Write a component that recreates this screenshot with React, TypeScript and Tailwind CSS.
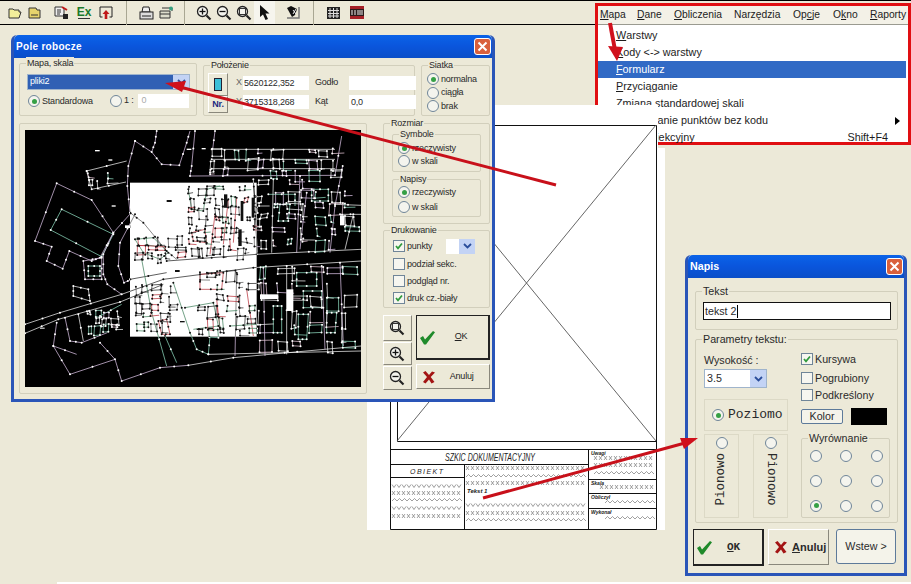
import React from "react";

const FONT = { fontFamily: '"Liberation Sans", Arial, sans-serif' };

function Radio({ on = false, label, className = "" }: { on?: boolean; label?: string; className?: string }) {
  return (
    <span className={`flex items-center gap-[2px] leading-none text-[#2a2a2a] whitespace-nowrap ${className}`}>
      <span className="flex h-[12px] w-[12px] shrink-0 items-center justify-center rounded-full border border-[#6f8598] bg-[#f4f4ee]">
        {on && <span className="h-[5px] w-[5px] rounded-full bg-[#35a045]" />}
      </span>
      {label}
    </span>
  );
}

function Check({ on = false, label }: { on?: boolean; label: string }) {
  return (
    <span className="flex items-center gap-[2px] leading-none text-[#2a2a2a] whitespace-nowrap">
      <span className="flex h-[12px] w-[12px] shrink-0 items-center justify-center border border-[#6f8598] bg-[#f6f6f0]">
        {on && (
          <svg width="10" height="10" viewBox="0 0 10 10">
            <path d="M2 5l2 2.4L8 2.5" fill="none" stroke="#2f9a3c" strokeWidth="1.7" />
          </svg>
        )}
      </span>
      {label}
    </span>
  );
}

function Group({ label, className = "", children }: { label?: string; className?: string; children?: React.ReactNode }) {
  return (
    <div className={`relative rounded-[2px] border border-[#d2cfbc] ${className}`}>
      {label && (
        <span className="absolute -top-[7px] left-[6px] bg-[#ece9d8] px-[1px] leading-[12px] text-[#2a2a2a] whitespace-nowrap">
          {label}
        </span>
      )}
      {children}
    </div>
  );
}

function Raised({ className = "", children }: { className?: string; children?: React.ReactNode }) {
  return (
    <div className={`flex items-center border border-t-white border-l-white border-r-[#8a887c] border-b-[#8a887c] bg-[#ece9d8] ${className}`}>
      {children}
    </div>
  );
}

const GreenCheck = () => (
  <svg width="17" height="15" viewBox="0 0 17 15">
    <path d="M1 8l3-2 2 3.5L14 1l2 1.2L7 14.5H5z" fill="#1f8a2a" />
  </svg>
);
const RedX = () => (
  <svg width="14" height="14" viewBox="0 0 14 14">
    <path d="M1 2.5L3.5 1 7 5l3-3.5 3 1L8.700 7l3.800 5-3 1.500L7 9.500 3.500 13.500 1 12l4-5z" fill="#a31414" />
  </svg>
);
const Caret = () => (
  <span className="flex h-full w-[16px] shrink-0 items-center justify-center bg-[#c3d3f5]">
    <svg width="9" height="6" viewBox="0 0 9 6">
      <path d="M1 1l3.500 3.500L8 1" fill="none" stroke="#2a4d9a" strokeWidth="1.800" />
    </svg>
  </span>
);

function TitleBar({ title, cls }: { title: string; cls?: string }) {
  return (
    <div className="flex h-[23px] shrink-0 items-center justify-between rounded-t-[5px] bg-gradient-to-b from-[#0b63e8] via-[#0a55dc] to-[#0a4fc8] pl-[2px] pr-[1px]">
      <span className={`font-bold text-white ${cls ?? ""}`}>{title}</span>
      <span className="flex h-[17px] w-[17px] items-center justify-center rounded-[3px] border border-white bg-[#d9603c]">
        <svg width="11" height="11" viewBox="0 0 11 11">
          <path d="M1.500 1.500l8 8M9.500 1.500l-8 8" stroke="#fff" strokeWidth="2" />
        </svg>
      </span>
    </div>
  );
}

function Zoom({ kind, s = 16 }: { kind: "+" | "-" | "o"; s?: number }) {
  return (
    <svg width={s} height={s} viewBox="0 0 16 16">
      <circle cx="6.500" cy="6.500" r="5" fill="#f4f4ee" stroke="#222" strokeWidth="1.300" />
      <path d="M10.500 10.500L14.500 14.500" stroke="#222" strokeWidth="2.200" />
      {kind !== "-" && kind !== "o" && <path d="M6.500 3.500v6" stroke="#111" strokeWidth="1.300" />}
      {kind !== "o" && <path d="M3.500 6.500h6" stroke="#111" strokeWidth="1.300" />}
      {kind === "o" && <rect x="3.500" y="3.500" width="6" height="6" fill="none" stroke="#333" />}
    </svg>
  );
}

function Toolbar() {
  const sep = <span className="block h-[24px] w-px bg-[#a9a793]" />;
  return (
    <div className="flex h-[25px] items-center border-y border-black bg-[#ece9d8] pl-[8px]">
      <svg width="14" height="12" viewBox="0 0 14 12"><path d="M1 2h4l1 1h5v2h2l-2 6H1z" fill="#f3ef9a" stroke="#333" /></svg>
      <svg className="ml-[6px]" width="13" height="12" viewBox="0 0 13 12"><path d="M1 1h7l1 2h3v8H1z" fill="#e6d36c" stroke="#333" /><path d="M3 8h7" stroke="#333" /></svg>
      <svg className="ml-[13px]" width="15" height="14" viewBox="0 0 15 14"><path d="M1 1h7l2 2v7H1z" fill="#eee" stroke="#333" /><path d="M3 4h4M3 6h4M3 8h3" stroke="#333" /><path d="M8 1l5 3" stroke="#c01818" strokeWidth="2" /><rect x="9" y="8" width="5" height="5" fill="#222" /></svg>
      <span className="ml-[8px] flex w-[14px] flex-col items-center">
        <span className="text-[12px] font-bold leading-[11px] text-[#1c7a2c]">Ex</span>
        <span className="h-px w-[12px] bg-[#333]" />
      </span>
      <svg className="ml-[8px]" width="14" height="14" viewBox="0 0 14 14"><path d="M3.500 11H1V1h12v10h-2.500" fill="none" stroke="#222" /><path d="M7 4l3.500 4H8.300v5H5.700V8H3.500z" fill="#c01818" /></svg>
      <span className="ml-[13px]">{sep}</span>
      <svg className="ml-[12px]" width="15" height="14" viewBox="0 0 15 14"><path d="M4 1h6l1 5H3z" fill="#eee" stroke="#222" /><rect x="1" y="6" width="13" height="7" fill="#ddd" stroke="#222" /><path d="M3 10h9" stroke="#222" /></svg>
      <svg className="ml-[5px]" width="15" height="13" viewBox="0 0 15 13"><path d="M1 5h10v7H1z" fill="#dcdccc" stroke="#333" /><path d="M3 2h10v3M1 8h10" fill="none" stroke="#333" /><circle cx="12" cy="2.500" r="2" fill="#35a080" /></svg>
      <span className="ml-[10px]">{sep}</span>
      <span className="ml-[11px] flex items-center gap-[4px]">
        <Zoom kind="+" />
        <Zoom kind="-" />
        <Zoom kind="o" />
      </span>
      <span className="ml-[2px] flex h-[23px] w-[21px] items-center justify-center bg-[#f6f5ee]">
        <svg width="11" height="15" viewBox="0 0 11 15"><path d="M1 0v12l3-2.500L6.500 15 9 14 6.500 8.500H10.500z" fill="#111" /></svg>
      </span>
      <svg className="ml-[10px]" width="15" height="15" viewBox="0 0 15 15"><path d="M2 13h12V2" fill="none" stroke="#777" strokeWidth="1.500" /><path d="M2 3l4-2 6 3-2 6-3 2z" fill="#111" /><path d="M8 5l3 4M11 4L8 9" stroke="#eee" /></svg>
      <span className="ml-[13px]">{sep}</span>
      <svg className="ml-[13px]" width="13" height="12" viewBox="0 0 13 12"><rect width="13" height="12" fill="#222" /><path d="M3 1v10M6.500 1v10M10 1v10M1 3.500h11M1 6.500h11M1 9h11" stroke="#ddd" /></svg>
      <svg className="ml-[10px]" width="14" height="13" viewBox="0 0 14 13"><rect width="14" height="13" fill="#a52027" /><rect y="3" width="14" height="7" fill="#2a1a1a" /><path d="M2 4v5M5 4v5M8 4v5M10 4v5M12 4v5" stroke="#eee" /></svg>
    </div>
  );
}

function MenuPanel() {
  const items = ["Warstwy", "Kody <-> warstwy", "Formularz", "Przyciąganie", "Zmiana standardowej skali"];
  return (
    <div className="absolute left-[595px] top-[3px] flex h-[142px] w-[316px] flex-col border-[3px] border-[#e00f12] bg-white text-[10.800px] text-[#1c1c1c]">
      <div className="flex h-[19px] shrink-0 items-center border-b border-[#9a9a90] bg-[#f3f1e7] text-[10.300px]">
        <span className="ml-[2px] w-[37px]"><u>M</u>apa</span>
        <span className="w-[37px]"><u>D</u>ane</span>
        <span className="w-[60px]"><u>O</u>bliczenia</span>
        <span className="w-[59px]">Narzędzia</span>
        <span className="w-[40px]">Op<u>c</u>je</span>
        <span className="w-[37px]">O<u>k</u>no</span>
        <span><u>R</u>aporty</span>
      </div>
      <div className="flex flex-col pt-[2px]">
        {items.map((t) => (
          <div
            key={t}
            className={`flex h-[17px] items-center pl-[18px] pr-[2px] ${t === "Formularz" ? "mr-[2px] bg-[#316ac5] text-white" : ""}`}
          >
            <u>{t[0]}</u>
            {t.slice(1)}
          </div>
        ))}
        <div className="flex h-[17px] items-center justify-between pl-[14px] pr-[8px]">
          <span><u>W</u>ykazywanie punktów bez kodu</span>
          <svg width="5" height="8" viewBox="0 0 5 8"><path d="M0 0l5 4-5 4z" fill="#000" /></svg>
        </div>
        <div className="flex h-[17px] items-center justify-between pl-[12px] pr-[20px]">
          <span><u>U</u>kład projekcyjny</span>
          <span>Shift+F4</span>
        </div>
      </div>
    </div>
  );
}

function Zig({ x, y, w, k }: { x: number; y: number; w: number; k: "w" | "x" | "v" }) {
  const step = 5;
  const n = Math.floor(w / step);
  let d = "";
  for (let i = 0; i < n; i++) {
    const a = x + i * step;
    if (k === "x") d += `M${a} ${y - 2}l3 4M${a + 3} ${y - 2}l-3 4`;
    else if (k === "v") d += `M${a} ${y - 1.500}l2 3 2-3`;
    else d += `M${a} ${y + 1}l2.500-2.500 2.500 2.500`;
  }
  return <path d={d} stroke="#777" strokeWidth="0.700" fill="none" />;
}

function Sheet() {
  return (
    <svg className="absolute left-[367px] top-[105px]" width="298" height="425" viewBox="367 105 298 425">
      <path d="M367 105H658V148H665V530H367z" fill="#fff" />
      <g fill="none" stroke="#111" strokeWidth="1">
        <path d="M397.500 125.500H656.500V529.500H390.500V400M397.500 125.500V441.500H656.500" />
        <path d="M390.500 449.500H657M390.500 464.500H588.500M390.500 477.500H464.500M464.500 464.500V529.500M588.500 449.500V529.500M588.500 479.500H657M588.500 493.500H657M588.500 508.500H657" />
      </g>
      <path d="M397 125L656 441M656 125L397 441" stroke="#555" strokeWidth="0.900" />
      {[[392, 486, 70, "v"], [392, 493, 70, "x"], [392, 500, 70, "w"], [392, 508, 70, "v"], [392, 516, 70, "x"]].map((r, i) => (
        <Zig key={i} x={r[0] as number} y={r[1] as number} w={r[2] as number} k={r[3] as "w"} />
      ))}
      {[[466, 468, 120, "x"], [466, 476, 120, "w"], [466, 483, 120, "x"], [466, 505, 120, "v"], [466, 513, 120, "x"], [466, 520, 120, "w"], [594, 458, 62, "x"], [594, 465, 62, "x"], [594, 473, 62, "w"], [600, 487, 55, "x"], [605, 502, 50, "w"], [605, 518, 50, "w"]].map((r, i) => (
        <Zig key={i} x={r[0] as number} y={r[1] as number} w={r[2] as number} k={r[3] as "w"} />
      ))}
      <g fontFamily='"Liberation Sans", sans-serif' fontStyle="italic" fill="#222">
        <text x="445" y="461" fontSize="10.500" textLength="90" lengthAdjust="spacingAndGlyphs">SZKIC DOKUMENTACYJNY</text>
        <text x="410" y="474" fontSize="7" textLength="33">OBIEKT</text>
        <text x="467" y="493" fontSize="6" fontWeight="bold">Tekst 1</text>
        <text x="591" y="455" fontSize="5" fontWeight="bold">Uwagi</text>
        <text x="591" y="485" fontSize="5" fontWeight="bold">Skala</text>
        <text x="591" y="499" fontSize="5" fontWeight="bold">Obliczył</text>
        <text x="591" y="514" fontSize="5" fontWeight="bold">Wykonał</text>
      </g>
    </svg>
  );
}

type L = [string, number[]];
const BASE: L[] = [
  ["p", [110, 172, 215, 222, 280, 320, 240, 395, 215, 405, 148, 375, 128, 428, 80, 405, 95, 362, 45, 345, 110, 172]],
  ["g", [125, 250, 92, 312, 245, 392, 280, 325, 125, 250]],
  ["p", [332, 262, 280, 320, 250, 385, 250, 445, 262, 475, 305, 505]],
  ["p", [345, 265, 300, 350, 295, 420, 312, 470, 335, 460]],
  ["p", [345, 45, 325, 120, 322, 180, 330, 260, 370, 290, 440, 375, 470, 400]],
  ["p", [345, 45, 395, 78, 425, 115, 478, 118, 500, 50, 510, 15]],
  ["p", [525, 15, 515, 120, 510, 150, 945, 148, 965, 30]],
  ["p", [585, 15, 578, 70]],
  ["p", [410, 15, 405, 50, 395, 78]],
  ["p", [968, 120, 945, 240, 930, 380]],
  ["w", [945, 235, 1023, 238]],
  ["w", [960, 265, 1023, 265]],
  ["w", [200, 135, 320, 105]],
  ["w", [200, 135, 215, 190, 318, 168]],
  ["w", [15, 595, 120, 560, 305, 505, 430, 460, 700, 425, 1023, 405]],
  ["w", [15, 622, 115, 580, 300, 528, 430, 475]],
  ["w", [440, 405, 710, 385, 1023, 370]],
  ["w", [330, 460, 440, 440]],
  ["w", [505, 718, 640, 695, 1023, 660]],
  ["w", [565, 685, 1023, 675]],
  ["p", [110, 590, 100, 660, 150, 745, 285, 700, 305, 765, 420, 725, 505, 718]],
  ["p", [100, 660, 170, 685]],
  ["p", [135, 575, 150, 645, 185, 650, 262, 620]],
  ["w", [175, 565, 190, 645]],
  ["p", [240, 650, 285, 700]],
  ["g", [460, 470, 510, 620, 530, 670, 565, 685, 570, 630]],
  ["g", [365, 400, 395, 560, 440, 720]],
  ["w", [160, 480, 205, 490, 210, 525, 160, 510, 160, 480]],
  ["p", [190, 405, 245, 395, 245, 460, 195, 460, 190, 405]],
  ["g", [205, 420, 240, 420, 240, 450, 205, 450, 205, 420]],
  ["w", [575, 70, 945, 70]],
  ["w", [575, 100, 945, 100]],
  ["w", [575, 128, 945, 128]],
  ["g", [745, 205, 825, 205, 825, 240]],
  ["g", [875, 190, 925, 190, 925, 225, 875, 225, 875, 190]],
  ["g", [780, 235, 810, 235, 805, 285, 775, 285, 780, 235]],
  ["g", [760, 540, 785, 540, 785, 620, 760, 620, 760, 540]],
  ["g", [835, 565, 865, 565, 860, 640, 835, 640, 835, 565]],
  ["g", [920, 560, 950, 560, 945, 620, 920, 620, 920, 560]],
  ["g", [850, 495, 905, 495, 905, 545, 850, 545, 850, 495]],
  ["g", [830, 440, 890, 440, 890, 480, 830, 480, 830, 440]],
  ["p", [650, 440, 645, 690]],
  ["p", [730, 425, 735, 690]],
  ["w", [800, 420, 800, 685]],
  ["p", [905, 420, 915, 670]],
  ["p", [960, 410, 970, 660]],
  ["w", [700, 160, 712, 380]],
  ["w", [760, 160, 755, 380]],
  ["p", [840, 150, 830, 380]],
  ["p", [860, 200, 850, 280, 840, 370]],
  ["w", [1000, 265, 975, 370]],
  ["r", [515, 320, 555, 310, 560, 350, 520, 345, 515, 320]],
  ["g", [505, 190, 515, 250, 550, 255, 560, 190, 600, 180]],
  ["r", [625, 220, 610, 355]],
  ["r", [650, 215, 640, 350]],
  ["r", [585, 265, 570, 385]],
  ["g", [345, 340, 400, 335, 445, 380, 420, 400, 370, 380, 345, 340]],
  ["r", [540, 445, 610, 440, 605, 490, 540, 490, 540, 445]],
  ["g", [495, 545, 580, 530, 595, 600, 520, 610]],
  ["r", [590, 520, 600, 610]],
  ["r", [680, 490, 700, 630]],
  ["g", [630, 600, 710, 595]],
  ["r", [415, 585, 440, 580, 450, 625, 425, 625, 415, 585]],
  ["g", [435, 630, 470, 710]],
  ["g", [240, 570, 305, 535]],
];

function buildLines(): L[] {
  const out = [...BASE];
  let seed = 4711;
  const rnd = () => {
    seed = (seed * 1103515245 + 12345) & 0x7fffffff;
    return seed / 0x7fffffff;
  };
  const zones: [number, number, number, number, number, number][] = [
    [720, 160, 1000, 372, 42, 36],
    [720, 425, 1000, 650, 50, 44],
    [510, 185, 705, 378, 24, 30],
    [350, 335, 500, 392, 30, 24],
    [345, 480, 450, 620, 26, 28],
    [535, 440, 705, 620, 30, 34],
    [205, 555, 300, 620, 22, 22],
    [205, 140, 285, 180, 30, 22],
    [575, 72, 945, 140, 36, 30],
  ];
  const kinds = ["w", "p", "g", "w", "r"];
  zones.forEach(([x0, y0, x1, y1, sx, sy]) => {
    for (let x = x0; x < x1; x += sx) {
      for (let y = y0; y < y1; y += sy) {
        const roll = rnd();
        if (roll < 0.22) continue;
        const jx = x + rnd() * 10 - 5;
        const jy = y + rnd() * 10 - 5;
        const w = 8 + rnd() * (sx - 6);
        const h = 8 + rnd() * (sy - 4);
        const s = rnd() * 6 - 3;
        const k = kinds[Math.floor(rnd() * kinds.length)];
        if (roll < 0.55) {
          // open run of a wall: a street front or a single fence
          out.push([k, [jx, jy, jx + s, jy + h, jx + w, jy + h + s]]);
        } else {
          out.push([k, [jx, jy, jx + w, jy + s, jx + w + s, jy + h, jx + s, jy + h - s, jx, jy]]);
        }
      }
    }
  });
  return out;
}
const LINES = buildLines();

const BLOBS = [
  [440, 222, 15, 6], [275, 238, 12, 4], [225, 72, 14, 4], [265, 100, 12, 4], [500, 68, 14, 4], [545, 66, 12, 4],
  [350, 335, 10, 6], [60, 605, 14, 3], [480, 585, 14, 4], [530, 608, 14, 4], [565, 605, 14, 4],
  [720, 505, 55, 14], [800, 490, 20, 65], [960, 268, 14, 30], [465, 432, 14, 6],
  [612, 205, 10, 40], [662, 225, 8, 60], [695, 215, 8, 60], [655, 310, 10, 50], [315, 298, 16, 8],
];

function MapView() {
  const colour = (k: string, light: boolean) =>
    light
      ? { p: "#5a5a5a", w: "#222", g: "#3f7f5a", r: "#b8303a" }[k]
      : { p: "#dcc3e6", w: "#f2f2f2", g: "#8fdcc0", r: "#e8c8d8" }[k];
  const layer = (light: boolean) => {
    const dot = light ? "#111" : "#fff";
    return (
      <g>
        {LINES.map(([k, pts], i) => (
          <polyline key={i} points={pts.join(",")} fill="none" stroke={colour(k, light)} strokeWidth="2.200" />
        ))}
        {LINES.map(([, pts], i) =>
          pts.map((_, j) =>
            j % 2 === 0 && j + 3 < pts.length ? (
              <g key={`${i}-${j}`}>
                <circle cx={pts[j]} cy={pts[j + 1]} r="3" fill={dot} />
                {i < BASE.length && (
                  <circle cx={(pts[j] + pts[j + 2]) / 2} cy={(pts[j + 1] + pts[j + 3]) / 2} r="3" fill={dot} />
                )}
              </g>
            ) : null
          )
        )}
        {BLOBS.map(([x, y, w, h], i) => (
          <rect key={i} x={x} y={y} width={w} height={h} fill={dot} />
        ))}
      </g>
    );
  };
  return (
    <svg width="336" height="257" viewBox="15 12 1008 771" className="block bg-black">
      <defs>
        <clipPath id="sheetClip">
          <rect x="330" y="170" width="380" height="462" />
        </clipPath>
      </defs>
      {layer(false)}
      <rect x="330" y="170" width="380" height="462" fill="#fff" />
      <g clipPath="url(#sheetClip)">{layer(true)}</g>
    </svg>
  );
}

function PoleRobocze() {
  return (
    <div className="absolute left-[11px] top-[35px] flex h-[367px] w-[484px] flex-col rounded-t-[6px] border-[3px] border-t-0 border-[#2a55b8] bg-[#ece9d8] text-[9px] tracking-[-0.200px]">
      <TitleBar title="Pole robocze" cls="text-[10px] tracking-[0.300px]" />
      <div className="flex flex-col gap-[7px] pl-[5px] pt-[4px]">
        <div className="flex items-start gap-[6px]">
          <Group label="Mapa, skala" className="mt-px flex h-[53px] w-[178px] flex-col px-[7px] pt-[10px]">
            <div className="flex h-[16px] w-[163px] items-center justify-between border border-[#9fb4cc] bg-[#3060b4] pl-[2px] text-white">
              pliki2
              <Caret />
            </div>
            <div className="mt-[4px] flex items-center">
              <Radio on label="Standardowa" className="w-[84px] pl-[1px]" />
              <Radio className="ml-[3px]" />
              <span className="ml-[2px] w-[15px] text-[#2a2a2a]">1 :</span>
              <span className="flex h-[14px] w-[53px] items-center bg-white pl-[3px] text-[#aaa]">0</span>
            </div>
          </Group>
          <Group label="Położenie" className="mt-[3px] flex h-[51px] w-[212px] pl-[4px] pt-[7px]">
            <div className="flex flex-col">
              <Raised className="h-[23px] w-[20px] justify-center">
                <span className="h-[13px] w-[8px] border border-[#223] bg-[#3cc0d8]" />
              </Raised>
              <Raised className="h-[17px] w-[20px] justify-center text-[9px] font-bold text-[#1c2a80]">Nr.</Raised>
            </div>
            <div className="ml-[8px] flex flex-col gap-[5px] pt-[3px] text-[#2a2a2a]">
              {[["X", "5620122,352", "Godło", ""], ["Y", "3715318,268", "Kąt", "0,0"]].map(([a, b, c, d]) => (
                <div key={a} className="flex h-[14px] items-center">
                  <span className="w-[7px] text-[#666]">{a}</span>
                  <span className="w-[66px] bg-white pl-[1px] leading-[14px]">{b}</span>
                  <span className="ml-[6px] w-[34px]">{c}</span>
                  <span className="h-[14px] w-[67px] bg-white pl-[2px] leading-[14px]">{d}</span>
                </div>
              ))}
            </div>
          </Group>
          <Group label="Siatka" className="mt-[3px] flex h-[51px] w-[69px] flex-col gap-[1.500px] pl-[5px] pt-[7px]">
            <Radio on label="normalna" />
            <Radio label="ciągła" />
            <Radio label="brak" />
          </Group>
        </div>
        <div className="flex items-start">
          <Group className="flex h-[271px] w-[348px] items-center justify-center">
            <MapView />
          </Group>
          <div className="ml-[16px] flex w-[107px] flex-col">
            <Group label="Rozmiar" className="flex h-[101px] flex-col gap-[7px] px-[8px] pt-[10px]">
              <Group label="Symbole" className="flex h-[38px] flex-col gap-[1px] pl-[5px] pt-[7px]">
                <Radio on label="rzeczywisty" />
                <Radio label="w skali" />
              </Group>
              <Group label="Napisy" className="flex h-[38px] flex-col gap-[3px] pl-[5px] pt-[6px]">
                <Radio on label="rzeczywisty" />
                <Radio label="w skali" />
              </Group>
            </Group>
            <Group label="Drukowanie" className="mt-[6px] flex h-[78px] flex-col gap-[5px] pl-[9px] pt-[8px]">
              <div className="flex h-[14px] items-center">
                <span className="w-[53px]"><Check on label="punkty" /></span>
                <span className="flex h-[15px] w-[29px] justify-end bg-white"><Caret /></span>
              </div>
              <div className="flex h-[12px] items-center"><Check label="podział sekc." /></div>
              <div className="flex h-[12px] items-center"><Check label="podgląd nr." /></div>
              <div className="flex h-[12px] items-center"><Check on label="druk cz.-biały" /></div>
            </Group>
            <div className="mt-[7px] flex gap-[4px]">
              <div className="flex w-[29px] flex-col gap-[1px]">
                <Raised className="h-[26px] justify-center"><Zoom kind="o" /></Raised>
                <Raised className="h-[23px] justify-center"><Zoom kind="+" /></Raised>
                <Raised className="h-[24px] justify-center"><Zoom kind="-" /></Raised>
              </div>
              <div className="flex w-[75px] flex-col gap-[4px]">
                <div className="flex h-[45px] items-center border border-[#222] border-r-2 border-b-2 bg-[#ece9d8] pl-[2px] text-[#222]">
                  <GreenCheck />
                  <span className="ml-[19px]"><u>O</u>K</span>
                </div>
                <Raised className="h-[25px] pl-[5px]">
                  <RedX />
                  <span className="ml-[14px] text-[#222]">Anuluj</span>
                </Raised>
              </div>
            </div>
          </div>
        </div>
      </div>
    </div>
  );
}

function Napis() {
  const mono = { fontFamily: '"Liberation Mono", "Courier New", monospace' };
  return (
    <div className="absolute left-[685px] top-[255px] flex h-[321px] w-[222px] flex-col rounded-t-[6px] border-[3px] border-t-0 border-[#2a55b8] bg-[#ece9d8] text-[10.700px] text-[#2a2a2a]">
      <TitleBar title="Napis" />
      <div className="flex flex-col pl-[7px] pt-[13px]">
        <Group label="Tekst" className="h-[39px] w-[203px] pl-[7px] pt-[10px]">
          <div className="flex h-[18px] w-[188px] items-center border border-[#111] bg-white pl-px">
            tekst 2<span className="ml-px h-[13px] w-px bg-black" />
          </div>
        </Group>
        <Group label="Parametry tekstu:" className="mt-[9px] flex h-[184px] w-[203px] pl-[8px] pt-[13px]">
          <div className="flex w-[84px] flex-col">
            <span className="h-[16px] leading-[14px]">Wysokość :</span>
            <div className="flex h-[19px] w-[63px] items-center justify-between border border-[#9fb4cc] bg-white pl-[2px]">
              3.5
              <Caret />
            </div>
            <div className="mt-[11px] flex h-[32px] items-center gap-[4px] border border-[#dcd9c6] pl-[7px] text-[13px]" style={mono}>
              <Radio on />
              <span>Poziomo</span>
            </div>
            <div className="mt-[3px] flex justify-between">
              <div className="flex h-[84px] w-[35px] flex-col items-center border border-[#dcd9c6] pt-[2px]">
                <Radio />
                <span className="mt-[4px] rotate-180 text-[12.500px] [writing-mode:vertical-rl]" style={mono}>Pionowo</span>
              </div>
              <div className="flex h-[84px] w-[35px] flex-col items-center border border-[#dcd9c6] pt-[2px]">
                <Radio />
                <span className="mt-[4px] text-[12.500px] [writing-mode:vertical-rl]" style={mono}>Pionowo</span>
              </div>
            </div>
          </div>
          <div className="ml-[13px] flex w-[90px] flex-col">
            <div className="flex flex-col gap-[5px]">
              <Check on label="Kursywa" />
              <span className="mt-[2px]"><Check label="Pogrubiony" /></span>
              <Check label="Podkreślony" />
            </div>
            <div className="mt-[7px] flex items-center">
              <span className="flex h-[15px] w-[42px] items-center justify-center rounded-[2px] border border-[#5d7a9a] bg-[#f4f3ea]">Kolor</span>
              <span className="ml-[8px] h-[17px] w-[36px] bg-black" />
            </div>
            <Group label="Wyrównanie" className="mt-[13px] grid h-[80px] w-[89px] grid-cols-[28px_31px_31px] grid-rows-[25px_25px_25px] items-center justify-items-center pt-[4px]">
              {[0, 1, 2, 3, 4, 5, 6, 7, 8].map((i) => (
                <Radio key={i} on={i === 6} />
              ))}
            </Group>
          </div>
        </Group>
        <div className="mt-[6px] flex items-start">
          <div className="-ml-[2px] flex h-[37px] w-[71px] items-center border border-[#222] border-r-2 border-b-2 pl-[2px]">
            <GreenCheck />
            <span className="ml-[14px] text-[11px] font-bold" style={mono}><u>O</u>K</span>
          </div>
          <Raised className="ml-[4px] h-[36px] w-[61px] pl-[5px]">
            <RedX />
            <span className="ml-[4px] font-bold text-[11px]"><u>A</u>nuluj</span>
          </Raised>
          <div className="ml-[7px] flex h-[35px] w-[60px] items-center justify-center rounded-[3px] border border-[#5d7a9a] bg-[#f4f3ea]">Wstew &gt;</div>
        </div>
      </div>
    </div>
  );
}

function Arrows() {
  return (
    <svg className="pointer-events-none absolute left-0 top-0" width="911" height="584">
      <g fill="#d0101c" stroke="none">
        <path d="M556 185L180 87" stroke="#c8101a" strokeWidth="3" />
        <path d="M165 83L186 81L182 92z" />
        <path d="M610 23L615 50" stroke="#d0101c" strokeWidth="4" />
        <path d="M617 61L608 46L623 47z" />
        <path d="M483 498L685 443" stroke="#c8101a" strokeWidth="3" />
        <path d="M698 438L680 438L684 449z" />
      </g>
    </svg>
  );
}

export default function App() {
  return (
    <div className="relative h-[584px] w-[911px] overflow-hidden bg-[#ece9d8]" style={FONT}>
      <Toolbar />
      <MenuPanel />
      <Sheet />
      <PoleRobocze />
      <Napis />
      <Arrows />
      <div className="absolute bottom-0 left-[57px] right-0 h-[2px] bg-white" />
    </div>
  );
}
